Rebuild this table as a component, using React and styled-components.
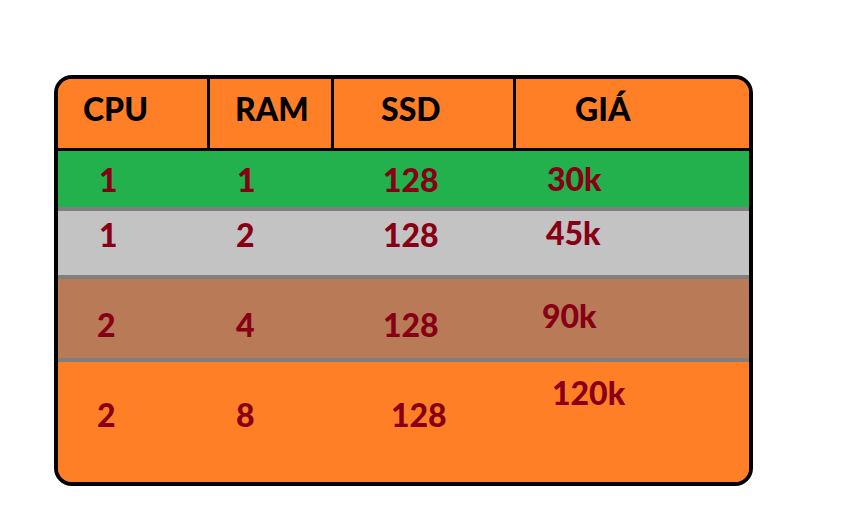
import React from "react";
import styled, { createGlobalStyle } from "styled-components";

const GlobalStyle = createGlobalStyle`
  body {
    margin: 0;
    background: #ffffff;
    font-family: "Lato", "Open Sans", sans-serif;
  }
`;

const Page = styled.div`
  padding: 75px 0 0 54px;
`;

const Table = styled.div`
  width: 699px;
  box-sizing: border-box;
  border: 4px solid #000;
  border-radius: 18px;
  overflow: hidden;
  background: #ff7f27;
`;

const Row = styled.div`
  display: grid;
  grid-template-columns: 152px 124px 182px 1fr;
  align-items: start;
  height: ${(p) => p.height}px;
  box-sizing: border-box;
  background: ${(p) => p.bg};
  border-top: ${(p) => (p.divider ? "4px solid #7f7f7f" : "none")};
`;

const HeaderRow = styled(Row)`
  border-bottom: 3px solid #000;
`;

const HeadCell = styled.div`
  height: 100%;
  box-sizing: border-box;
  padding: 14px 0 0 ${(p) => p.pad}px;
  border-right: ${(p) => (p.last ? "none" : "3px solid #000")};
  font-size: 32px;
  font-weight: 900;
  line-height: 32px;
  color: #000;
`;

const Cell = styled.div`
  padding: ${(p) => p.top}px 0 0 ${(p) => p.pad}px;
  font-size: 32px;
  font-weight: 900;
  line-height: 32px;
  color: #880015;
`;

const headers = [
  { label: "CPU", pad: 25 },
  { label: "RAM", pad: 25 },
  { label: "SSD", pad: 47 },
  { label: "GIÁ", pad: 59 },
];

const rows = [
  {
    bg: "#22b14c",
    height: 56,
    cells: [
      ["1", 41, 13],
      ["1", 27, 13],
      ["128", 49, 13],
      ["30k", 31, 12],
    ],
  },
  {
    bg: "#c3c3c3",
    height: 68,
    divider: true,
    cells: [
      ["1", 41, 8],
      ["2", 26, 8],
      ["128", 49, 8],
      ["45k", 30, 6],
    ],
  },
  {
    bg: "#b97a57",
    height: 83,
    divider: true,
    cells: [
      ["2", 39, 30],
      ["4", 26, 30],
      ["128", 49, 30],
      ["90k", 26, 21],
    ],
  },
  {
    bg: "#ff7f27",
    height: 124,
    divider: true,
    cells: [
      ["2", 39, 37],
      ["8", 26, 37],
      ["128", 57, 37],
      ["120k", 36, 15],
    ],
  },
];

const App = () => {
  return (
    <Page>
      <GlobalStyle />
      <Table>
        <HeaderRow bg="#ff7f27" height={72}>
          {headers.map((h, i) => (
            <HeadCell key={h.label} pad={h.pad} last={i === headers.length - 1}>
              {h.label}
            </HeadCell>
          ))}
        </HeaderRow>
        {rows.map((r, i) => (
          <Row key={i} bg={r.bg} height={r.height} divider={r.divider}>
            {r.cells.map(([text, pad, top], j) => (
              <Cell key={j} pad={pad} top={top}>
                {text}
              </Cell>
            ))}
          </Row>
        ))}
      </Table>
    </Page>
  );
};

export default App;
